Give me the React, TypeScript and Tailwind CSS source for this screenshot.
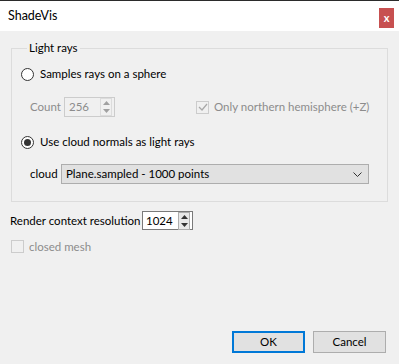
import React from 'react';

const font = { fontFamily: 'Lato, "Noto Sans", "Liberation Sans", sans-serif' };

const Spinner = ({ disabled }: { disabled?: boolean }) => (
  <div
    className={`flex flex-col w-[12px] h-[18px] border ${
      disabled ? 'border-[#dcdcdc]' : 'border-[#adadad] bg-[#e8e8e8]'
    }`}
  >
    <div className="flex-1 flex items-center justify-center">
      <svg width="7" height="4" viewBox="0 0 7 4">
        <path d="M0 4 L3.5 0 L7 4 Z" fill={disabled ? '#a0a0a0' : '#333'} />
      </svg>
    </div>
    <div className="flex-1 flex items-center justify-center">
      <svg width="7" height="4" viewBox="0 0 7 4">
        <path d="M0 0 L3.5 4 L7 0 Z" fill={disabled ? '#a0a0a0' : '#333'} />
      </svg>
    </div>
  </div>
);

const Radio = ({ checked }: { checked?: boolean }) => (
  <div className="shrink-0 w-[13px] h-[13px] rounded-full border border-[#333] bg-white flex items-center justify-center">
    {checked && <div className="w-[7px] h-[7px] rounded-full bg-[#333]" />}
  </div>
);

export default function App() {
  return (
    <div className="w-[399px] h-[364px] flex flex-col text-[11.5px] text-black whitespace-nowrap" style={font}>
      <div className="h-[31px] shrink-0 bg-white border-t border-[#2b2b2b] flex items-center justify-between pl-[8px] pr-[5px]">
        <span className="text-[12.5px]">ShadeVis</span>
        <div className="w-[15px] h-[20px] bg-[#c75050] text-white flex items-center justify-center text-[11px] font-bold mt-[4px]">
          x
        </div>
      </div>

      <div className="flex-1 bg-[#f0f0f0] flex flex-col pt-[9px]">
        <fieldset className="min-w-0 mx-[11px] border border-[#dcdcdc] pl-[9px] pr-[18px] pb-[17px]">
          <legend className="ml-[6px] px-[2px] leading-[16px]">Light rays</legend>

          <div className="mt-[8px] h-[20px] flex items-center gap-[6px]">
            <Radio />
            <span>Samples rays on a sphere</span>
          </div>

          <div className="mt-[13px] h-[20px] flex items-center">
            <span className="ml-[9px] text-[#8c8c8c] w-[34px] shrink-0">Count</span>
            <div className="shrink-0 w-[51px] h-[20px] border border-[#cccccc] flex items-center justify-between pl-[4px] pr-[2px]">
              <span className="text-[#8c8c8c]">256</span>
              <Spinner disabled />
            </div>
            <div className="ml-[81px] flex items-center gap-[5px]">
              <div className="shrink-0 w-[13px] h-[13px] border border-[#cccccc] bg-[#f0f0f0] flex items-center justify-center">
                <svg width="10" height="8" viewBox="0 0 10 8">
                  <path d="M1 4 L4 7 L9 1" stroke="#a8a8a8" strokeWidth="1.3" fill="none" />
                </svg>
              </div>
              <span className="text-[#8c8c8c]">Only northern hemisphere (+Z)</span>
            </div>
          </div>

          <div className="mt-[15px] h-[20px] flex items-center gap-[6px]">
            <Radio checked />
            <span>Use cloud normals as light rays</span>
          </div>

          <div className="mt-[12px] h-[20px] flex items-center">
            <span className="ml-[9px] w-[31px] shrink-0">cloud</span>
            <div className="flex-1 h-[20px] bg-[#e1e1e1] border border-[#adadad] flex items-center justify-between pl-[4px] pr-[6px]">
              <span>Plane.sampled - 1000 points</span>
              <svg width="9" height="5" viewBox="0 0 9 5">
                <path d="M0.5 0.5 L4.5 4.5 L8.5 0.5" stroke="#333" fill="none" />
              </svg>
            </div>
          </div>
        </fieldset>

        <div className="mt-[9px] ml-[10px] h-[19px] flex items-center">
          <span className="w-[132px] shrink-0">Render context resolution</span>
          <div className="shrink-0 w-[51px] h-[19px] border border-[#7a7a7a] bg-white flex items-center justify-between pl-[3px] pr-[2px]">
            <span>1024</span>
            <Spinner />
          </div>
        </div>

        <div className="mt-[10px] ml-[11px] h-[13px] flex items-center gap-[5px]">
          <div className="shrink-0 w-[13px] h-[13px] border border-[#cccccc] bg-[#f0f0f0]" />
          <span className="text-[#8c8c8c]">closed mesh</span>
        </div>

        <div className="mt-auto mb-[11px] flex justify-end gap-[8px] pr-[13px]">
          <button className="w-[73px] h-[22px] bg-[#e1e1e1] border-2 border-[#0078d7]">OK</button>
          <button className="w-[73px] h-[22px] bg-[#e1e1e1] border border-[#adadad]">Cancel</button>
        </div>
      </div>
    </div>
  );
}
